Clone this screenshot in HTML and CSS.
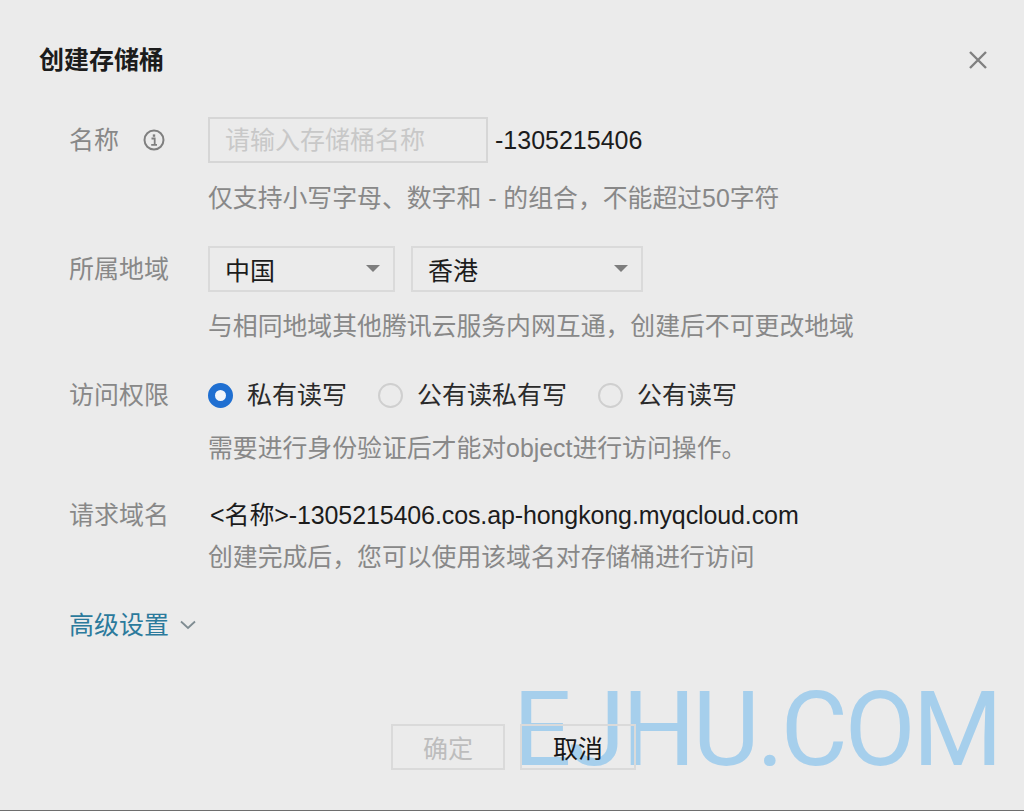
FILE: index.html
```html
<!DOCTYPE html>
<html lang="zh-CN">
<head>
  <meta charset="UTF-8" />
  <title>创建存储桶</title>
  <link rel="stylesheet" href="styles.css">
</head>
<body>
  <div class="watermark">EJHU.COM</div>

  <div class="dialog">
    <div class="dialog-head">
      <h1 class="dialog-title">创建存储桶</h1>
      <svg class="close-icon" width="20" height="20" viewBox="0 0 20 20">
        <path d="M2 2 L18 18 M18 2 L2 18" stroke="#808080" stroke-width="2.4" fill="none" />
      </svg>
    </div>

    <div class="field field-name">
      <div class="field-label field-label-tall">
        <span>名称</span>
        <svg class="info-icon" width="22" height="22" viewBox="0 0 22 22">
          <circle cx="11" cy="11" r="9.5" stroke="#7f7f7f" stroke-width="2" fill="none" />
          <path d="M8.5 9.5 H11.7 V15.5 M8.2 15.8 H14" stroke="#7f7f7f" stroke-width="1.8" fill="none" />
          <rect x="9.8" y="5.4" width="2.4" height="2.4" fill="#7f7f7f" />
        </svg>
      </div>
      <div class="field-body">
        <div class="name-line">
          <div class="text-input">请输入存储桶名称</div>
          <span class="value">-1305215406</span>
        </div>
        <p class="help help-name">仅支持小写字母、数字和 - 的组合，不能超过50字符</p>
      </div>
    </div>

    <div class="field field-region">
      <div class="field-label field-label-tall"><span>所属地域</span></div>
      <div class="field-body">
        <div class="select-line">
          <div class="select select-country"><span>中国</span><i class="arrow"></i></div>
          <div class="select select-city"><span>香港</span><i class="arrow"></i></div>
        </div>
        <p class="help help-region">与相同地域其他腾讯云服务内网互通，创建后不可更改地域</p>
      </div>
    </div>

    <div class="field field-access">
      <div class="field-label"><span>访问权限</span></div>
      <div class="field-body">
        <div class="radio-line">
          <label class="radio radio-checked"><i class="radio-dot"></i>私有读写</label>
          <label class="radio"><i class="radio-dot"></i>公有读私有写</label>
          <label class="radio"><i class="radio-dot"></i>公有读写</label>
        </div>
        <p class="help help-access">需要进行身份验证后才能对object进行访问操作。</p>
      </div>
    </div>

    <div class="field field-domain">
      <div class="field-label"><span>请求域名</span></div>
      <div class="field-body">
        <div class="value domain-value">&lt;名称&gt;-1305215406.cos.ap-hongkong.myqcloud.com</div>
        <p class="help help-domain">创建完成后，您可以使用该域名对存储桶进行访问</p>
      </div>
    </div>

    <a class="advanced">
      高级设置
      <svg width="18" height="12" viewBox="0 0 18 12">
        <path d="M2 2.5 L9 9 L16 2.5" stroke="#7f8c92" stroke-width="1.8" fill="none" />
      </svg>
    </a>

    <div class="dialog-foot">
      <button class="btn btn-disabled">确定</button>
      <button class="btn">取消</button>
    </div>
  </div>
</body>
</html>
```

FILE: styles.css
```css
html, body {
  margin: 0;
  height: 100%;
}

body {
  position: relative;
  box-sizing: border-box;
  height: 811px;
  overflow: hidden;
  background-color: #ebebeb;
  border-bottom: 1px solid #6e6e6e;
  font-family: "Liberation Sans", "Noto Sans CJK SC", sans-serif;
  font-size: 25px;
  color: #888;
}

.watermark {
  position: absolute;
  left: 513px;
  top: 672px;
  font-family: Roboto, sans-serif;
  font-size: 103px;
  letter-spacing: -3px;
  line-height: 116px;
  color: #a6cfec;
  white-space: nowrap;
}

.dialog {
  position: relative;
  padding: 40px 36px 0 39px;
}

.dialog-head {
  display: flex;
  justify-content: space-between;
  align-items: center;
  height: 40px;
}

.dialog-title {
  margin: 0;
  font-size: 25px;
  font-weight: 700;
  line-height: 40px;
  color: #1c1c1c;
}

.close-icon {
  flex: none;
}

.field {
  display: grid;
  grid-template-columns: 139px 1fr;
  margin-left: 30px;
}

.field-name { margin-top: 37px; }
.field-region { margin-top: 32px; }
.field-access { margin-top: 38px; }
.field-domain { margin-top: 36px; }

.field-label {
  display: flex;
  align-items: flex-start;
  line-height: 30px;
}

.field-label-tall {
  padding-top: 8px;
}

.info-icon {
  margin: 4px 0 0 24px;
}

.help {
  margin: 0;
  font-size: 24.85px;
  line-height: 30px;
  white-space: nowrap;
}

.help-name { margin-top: 21px; }
.help-region { margin-top: 20px; }
.help-access { margin-top: 24px; }
.help-domain { margin-top: 13px; }

.value {
  color: #1c1c1c;
  line-height: 30px;
  white-space: nowrap;
}

.domain-value {
  padding-left: 2px;
  letter-spacing: -0.11px;
}

.name-line {
  display: flex;
  align-items: center;
  gap: 7px;
}

.text-input {
  box-sizing: border-box;
  width: 280px;
  height: 46px;
  padding-left: 15px;
  border: 2px solid #d6d6d6;
  line-height: 42px;
  color: #c8c8c8;
}

.select-line {
  display: flex;
  gap: 16px;
}

.select {
  box-sizing: border-box;
  display: flex;
  justify-content: space-between;
  align-items: center;
  height: 46px;
  padding: 0 13px 0 15px;
  border: 2px solid #dadada;
  color: #1c1c1c;
}

.select-country { width: 187px; }
.select-city { width: 232px; }

.arrow {
  width: 0;
  height: 0;
  margin-top: -2px;
  border-left: 7px solid transparent;
  border-right: 7px solid transparent;
  border-top: 7px solid #7d7d7d;
}

.radio-line {
  display: flex;
  height: 30px;
}

.radio {
  display: flex;
  align-items: center;
  gap: 14px;
  margin-right: 31px;
  color: #2a2a2a;
  line-height: 30px;
}

.radio-dot {
  box-sizing: border-box;
  width: 25px;
  height: 25px;
  border: 2px solid #cfcfcf;
  border-radius: 50%;
}

.radio-checked .radio-dot {
  border: 7px solid #1f6fd1;
  background-color: #f2f6fb;
}

.advanced {
  display: flex;
  align-items: center;
  gap: 10px;
  margin: 37px 0 0 30px;
  line-height: 30px;
  color: #2b7a9c;
}

.dialog-foot {
  display: flex;
  gap: 15px;
  margin: 84px 0 0 352px;
}

.btn {
  box-sizing: border-box;
  width: 116px;
  height: 46px;
  padding: 0;
  background: transparent;
  border: 2px solid #dadada;
  font: inherit;
  color: #161616;
}

.btn-disabled {
  width: 114px;
  color: #bdbdbd;
}
```
